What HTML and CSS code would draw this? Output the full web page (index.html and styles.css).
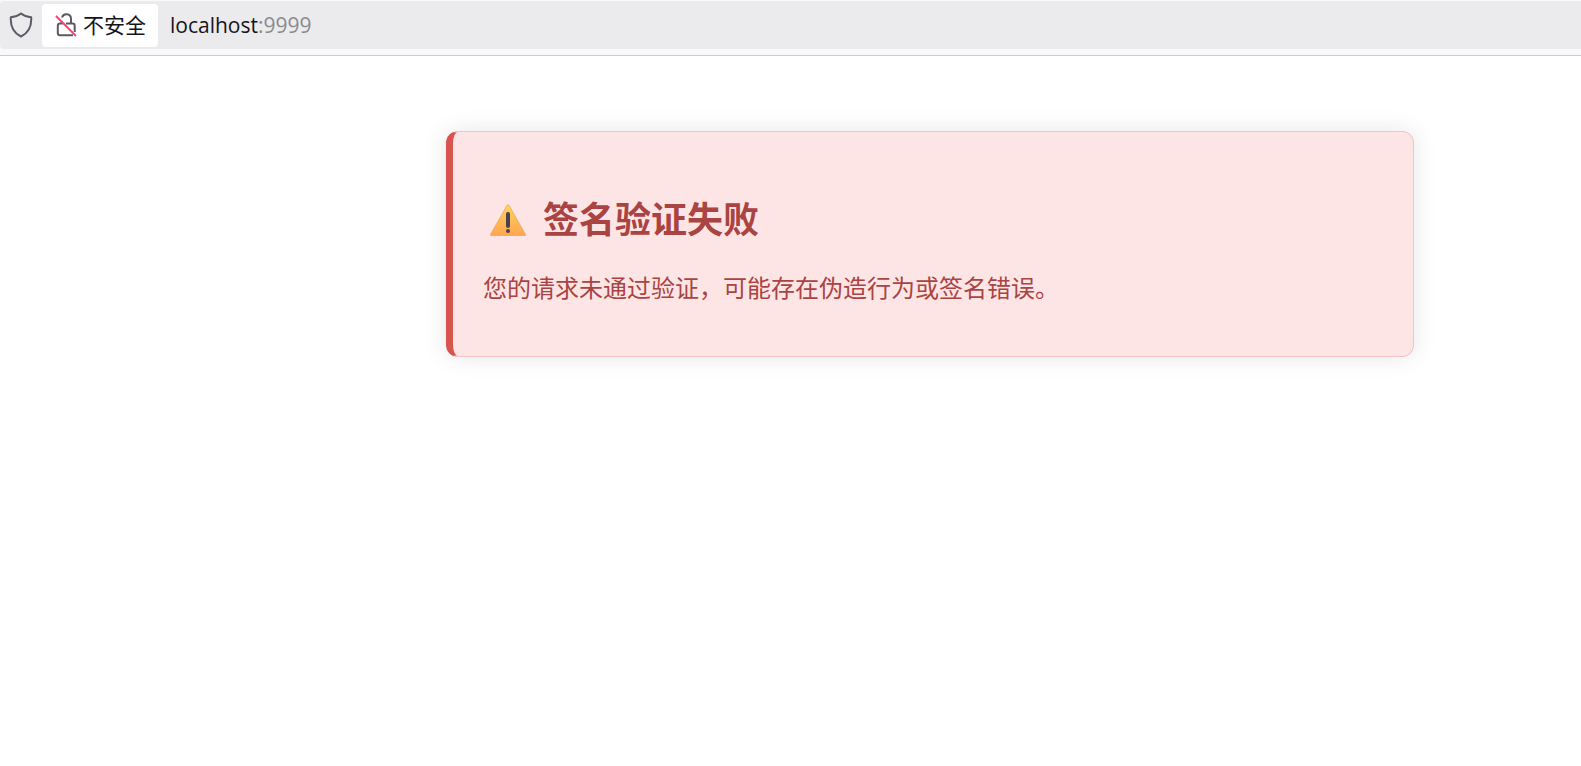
FILE: index.html
```html
<!DOCTYPE html>
<html lang="zh-CN">

<head>
    <meta charset="UTF-8">
    <meta name="viewport" content="width=device-width, initial-scale=1.0">
    <title>签名验证失败</title>
    <link rel="stylesheet" href="styles.css">
</head>

<body>
    <header class="toolbar">
        <div class="urlbar">
            <svg class="shield" viewBox="0 0 24 26" aria-hidden="true">
                <path d="M12 1.5 C9 4 5.5 5 1.8 5.3 C1.3 13.5 3.5 20.5 12 24.5 C20.5 20.5 22.7 13.5 22.2 5.3 C18.5 5 15 4 12 1.5Z" />
            </svg>
            <button type="button" class="identity">
                <svg class="lock" viewBox="0 0 22 26" aria-hidden="true">
                    <path d="M7 6.5 A4.6 4.6 0 0 1 16 7.5 V12.5 H17.5 a2.2 2.2 0 0 1 2.2 2.2 V21 M11 12.5 H16 M6.8 10 V12.5 H5 a2.2 2.2 0 0 0 -2.2 2.2 V22 a2.2 2.2 0 0 0 2.2 2.2 H18" />
                    <path class="slash" d="M1 5 L21 25" />
                </svg>
                <span>不安全</span>
            </button>
            <a class="address" href="#">localhost<span class="port">:9999</span></a>
        </div>
    </header>
    <main class="error-box">
        <h1>
            <svg class="warning" viewBox="0 0 36 32" aria-hidden="true">
                <defs>
                    <linearGradient id="amber" x1="0" y1="0" x2="0" y2="1">
                        <stop offset="0" stop-color="#ffd45c" />
                        <stop offset="1" stop-color="#ffa650" />
                    </linearGradient>
                </defs>
                <path fill="url(#amber)" stroke="#e59a48" stroke-width=".6" d="M17.2 1 Q18 0 18.8 1 L35.5 30.5 Q35.8 31.5 35 31.5 H1 Q.2 31.5 .5 30.5Z" />
                <rect x="16" y="8" width="4" height="16" rx="2" fill="#4a4054" />
                <circle cx="18" cy="27" r="2" fill="#4a4054" />
            </svg>
            签名验证失败
        </h1>
        <p>您的请求未通过验证，可能存在伪造行为或签名错误。</p>
    </main>
</body>

</html>
```
FILE: styles.css
```css
* {
    margin: 0;
    padding: 0;
    box-sizing: border-box;
}

body {
    min-height: 100vh;
    font-family: "Open Sans", "Noto Sans CJK SC", sans-serif;
    background: #fff;
}

.toolbar {
    padding: 1px 0 6px;
    background: #f9f9fb;
    border-bottom: 1px solid #ccc;
}

.urlbar {
    display: flex;
    align-items: center;
    height: 48px;
    padding-left: 9px;
    background: #ebebed;
    border-radius: 4px 0 0 4px;
}

.shield {
    width: 24px;
    height: 26px;
    margin-right: 9px;
    fill: none;
    stroke: #5b5b66;
    stroke-width: 2;
    stroke-linejoin: round;
}

.identity {
    display: flex;
    align-items: center;
    gap: 6px;
    height: 43px;
    padding: 0 12px 2px 13px;
    background: #fff;
    border: none;
    border-radius: 4px;
    color: #15141a;
    font-family: "Noto Sans CJK SC", sans-serif;
    font-size: 21px;
}

.lock {
    width: 22px;
    height: 26px;
    fill: none;
    stroke: #5b5b66;
    stroke-width: 2;
}

.lock .slash {
    stroke: #ff4070;
}

.address {
    margin-left: 12px;
    color: #15141a;
    font-size: 21px;
    text-decoration: none;
}

.port {
    color: #8a8a8e;
}

.error-box {
    margin: 75px 167px 0 446px;
    padding: 60px 30px 46px;
    background: #fde5e5;
    border: 1px solid #f5c2c7;
    border-left: 7px solid #d9534f;
    border-radius: 12px;
    box-shadow: 0 0 24px rgba(0, 0, 0, 0.1);
    color: #a94442;
}

h1 {
    display: flex;
    align-items: center;
    gap: 17px;
    padding-left: 7px;
    margin-bottom: 18px;
    font-size: 36px;
    line-height: 56px;
}

.warning {
    width: 36px;
    height: 32px;
}

p {
    font-size: 24px;
    line-height: 44px;
}
```
